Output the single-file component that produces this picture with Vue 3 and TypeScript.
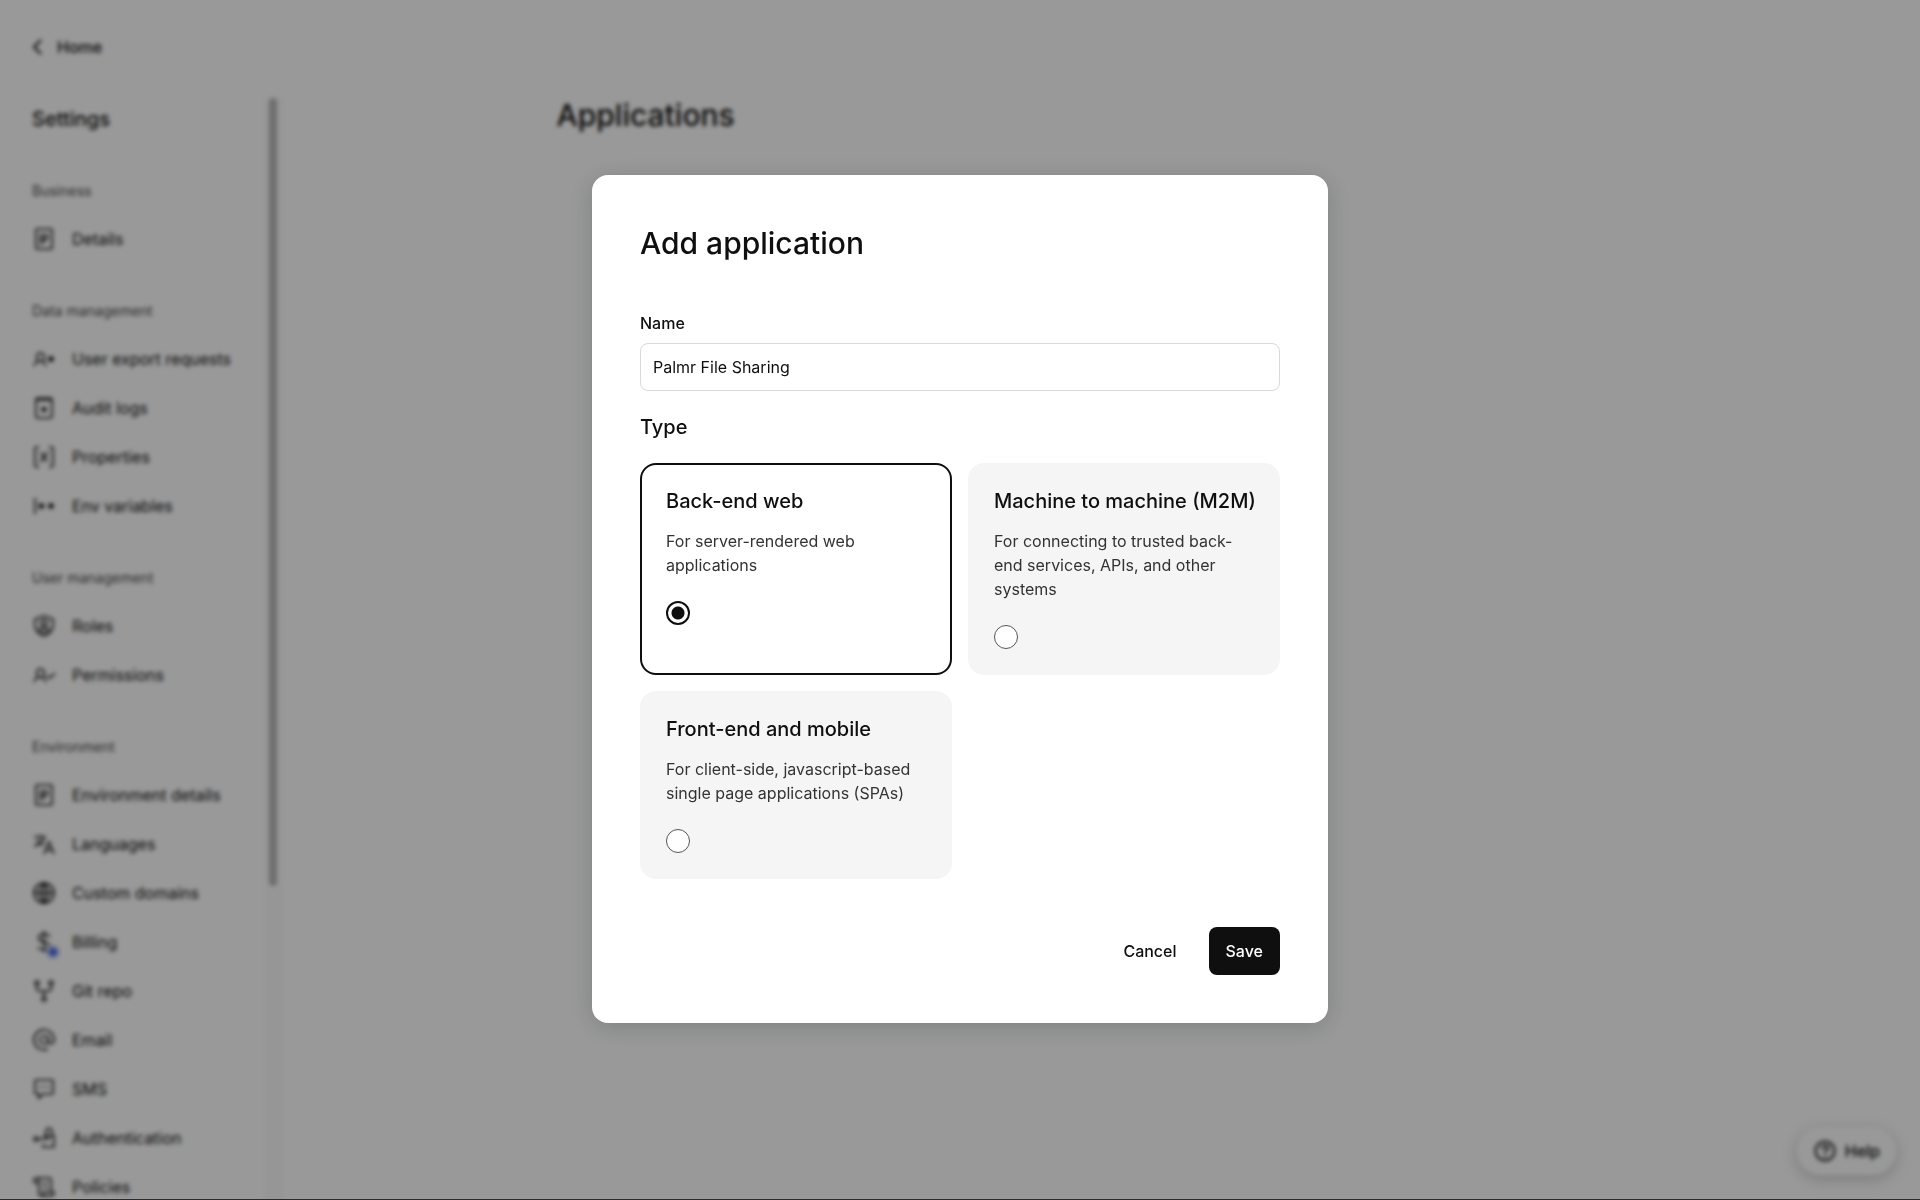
<script setup lang="ts">
import { ref } from 'vue'

interface NavItem {
  label: string
  icon: string
  badge?: boolean
}

interface NavGroup {
  title: string
  items: NavItem[]
}

interface AppType {
  id: string
  title: string
  description: string
}

const icons: Record<string, string> = {
  document: 'M5 2h14q1 0 1 1v18q0 1-1 1H5q-1 0-1-1V3q0-1 1-1zM9 18V8h6v4H9M12 12v4',
  userPlus: 'M2 19c1-4 3-5 6-5s5 1 6 5M5 13V9c0-4 7-4 7 0v4c-1 2-6 2-7 0M19 9v6M16 12h6M17 10l4 4M21 10l-4 4',
  audit: 'M6 2h12q2 0 2 2v16q0 2-2 2H6q-2 0-2-2V4q0-2 2-2zM4 4h16M12 11v5M9 13h6M10 12l4 3M14 12l-4 3',
  brackets: 'M7 2H5Q3 2 3 4v16q0 2 2 2h2M17 2h2q2 0 2 2v16q0 2-2 2h-2M8 8c4 0 4 8 8 8M16 7l-8 10',
  env: 'M3 4v16M7 12h5M9 9v6M7 10l5 4M12 10l-5 4M16 12h6M19 9v6M17 10l4 4M21 10l-4 4',
  shield: 'M12 2l9 3v7c0 5-4 8-9 10-5-2-9-5-9-10V5zM12 6a3 3 0 1 1 0 6 3 3 0 0 1 0-6M6 17c2-4 10-4 12 0M8 18h8',
  userCheck: 'M2 19c1-4 3-5 6-5s5 1 6 5M5 13V9c0-4 7-4 7 0v4c-1 2-6 2-7 0M15 13l3 2 5-5',
  languages: 'M2 5h12M8 3v2M12 5c-1 5-5 8-10 9M5 8c1 2 4 4 7 5M12 22l5-12 5 12M14 18h6',
  globe: 'M12 2a10 10 0 1 1 0 20 10 10 0 0 1 0-20M2 12h20M12 2v20M12 2c-6 6-6 14 0 20M12 2c6 6 6 14 0 20',
  dollar: 'M12 1v21M18 7c-1-2-3-3-6-3-7 0-7 7 0 8s7 8 0 8c-3 0-5-1-6-3',
  branch: 'M5 2a2 2 0 1 1 0 4 2 2 0 0 1 0-4M19 2a2 2 0 1 1 0 4 2 2 0 0 1 0-4M12 18a2 2 0 1 1 0 4 2 2 0 0 1 0-4M5 6v4q0 2 2 2h10q2 0 2-2V6M12 12v6',
  at: 'M12 8a4 4 0 1 1 0 8 4 4 0 0 1 0-8M16 8v5c0 4 6 3 6-1a10 10 0 1 0-6 9',
  chat: 'M4 3h16q1 0 1 1v12q0 1-1 1h-9l-4 4v-4H4q-1 0-1-1V4q0-1 1-1zM7 10h2M11 10h2M15 10h2',
  auth: 'M14 10V6c0-5 6-5 6 0v4M11 10h11v11H11v-3M4 11a2 2 0 1 1 0 4 2 2 0 0 1 0-4M6 13h10M16 10v4',
  scroll: 'M5 3h12q2 0 2 2v12M5 3c-4 0-4 5 0 5h2V3M7 8v10q0 3 3 3h9q3 0 3-4H11v4M11 8h4M11 12h4',
}

const groups: NavGroup[] = [
  { title: 'Business', items: [{ label: 'Details', icon: 'document' }] },
  {
    title: 'Data management',
    items: [
      { label: 'User export requests', icon: 'userPlus' },
      { label: 'Audit logs', icon: 'audit' },
      { label: 'Properties', icon: 'brackets' },
      { label: 'Env variables', icon: 'env' },
    ],
  },
  {
    title: 'User management',
    items: [
      { label: 'Roles', icon: 'shield' },
      { label: 'Permissions', icon: 'userCheck' },
    ],
  },
  {
    title: 'Environment',
    items: [
      { label: 'Environment details', icon: 'document' },
      { label: 'Languages', icon: 'languages' },
      { label: 'Custom domains', icon: 'globe' },
      { label: 'Billing', icon: 'dollar', badge: true },
      { label: 'Git repo', icon: 'branch' },
      { label: 'Email', icon: 'at' },
      { label: 'SMS', icon: 'chat' },
      { label: 'Authentication', icon: 'auth' },
      { label: 'Policies', icon: 'scroll' },
    ],
  },
]

const appTypes: AppType[] = [
  { id: 'backend', title: 'Back-end web', description: 'For server-rendered web applications' },
  {
    id: 'm2m',
    title: 'Machine to machine (M2M)',
    description: 'For connecting to trusted back-end services, APIs, and other systems',
  },
  {
    id: 'frontend',
    title: 'Front-end and mobile',
    description: 'For client-side, javascript-based single page applications (SPAs)',
  },
]

const name = ref('Palmr File Sharing')
const selected = ref('backend')
</script>

<template>
  <div class="app">
    <div class="page">
      <aside class="sidebar">
        <a class="home" href="#">
          <svg class="chevron" viewBox="0 0 12 18" aria-hidden="true"><path d="M9 2 2 9l7 7" /></svg>
          Home
        </a>
        <div class="scroller">
          <nav class="nav">
            <h2 class="nav-title">Settings</h2>
            <section v-for="group in groups" :key="group.title" class="group">
              <h3 class="group-title">{{ group.title }}</h3>
              <ul class="items">
                <li v-for="item in group.items" :key="item.label">
                  <a class="item" href="#">
                    <span class="item-icon">
                      <svg viewBox="0 0 24 24" aria-hidden="true"><path :d="icons[item.icon]" /></svg>
                      <span v-if="item.badge" class="badge"></span>
                    </span>
                    {{ item.label }}
                  </a>
                </li>
              </ul>
            </section>
          </nav>
          <div class="track"><div class="thumb"></div></div>
        </div>
      </aside>
      <main class="main">
        <div class="content">
          <h1 class="page-title">Applications</h1>
        </div>
      </main>
      <button class="help" type="button">
        <svg viewBox="0 0 24 24" aria-hidden="true">
          <circle cx="12" cy="12" r="9.5" />
          <path d="M9 10c0-4 6-4 6-1 0 3-3 2-3 5M12 16v2" />
        </svg>
        Help
      </button>
    </div>

    <div class="overlay">
      <form class="modal" role="dialog" aria-modal="true" aria-labelledby="dialog-title" @submit.prevent>
        <h2 id="dialog-title" class="modal-title">Add application</h2>
        <div class="field">
          <label for="app-name">Name</label>
          <input id="app-name" v-model="name" type="text" />
        </div>
        <fieldset class="types">
          <legend>Type</legend>
          <div class="cards">
            <label
              v-for="type in appTypes"
              :key="type.id"
              class="card"
              :class="{ selected: selected === type.id }"
            >
              <span class="card-title">{{ type.title }}</span>
              <span class="card-text">{{ type.description }}</span>
              <input v-model="selected" type="radio" name="app-type" :value="type.id" />
            </label>
          </div>
        </fieldset>
        <div class="actions">
          <button class="btn" type="button">Cancel</button>
          <button class="btn primary" type="submit">Save</button>
        </div>
      </form>
    </div>
  </div>
</template>

<style>
body {
  margin: 0;
}
</style>

<style scoped>
.app,
.app * {
  box-sizing: border-box;
}

.app {
  position: relative;
  height: 100vh;
  overflow: hidden;
  background: #fff;
  color: #0f0f0f;
  font: 400 16px/24px Inter, 'Liberation Sans', sans-serif;
}

h1,
h2,
h3,
ul {
  margin: 0;
  padding: 0;
  font-weight: 500;
  list-style: none;
}

a {
  color: inherit;
  text-decoration: none;
}

svg {
  display: block;
  fill: none;
  stroke: currentColor;
  stroke-width: 2;
}

.page {
  display: flex;
  height: 100%;
}

.sidebar {
  display: flex;
  flex-direction: column;
  flex: none;
  width: 283px;
}

.home {
  display: flex;
  align-items: center;
  gap: 13px;
  flex: none;
  height: 98px;
  padding: 0 32px 4px;
  font-weight: 500;
}

.chevron {
  width: 12px;
  height: 18px;
}

.scroller {
  display: flex;
  flex: 1;
  min-height: 0;
}

.nav {
  flex: 1;
  overflow: hidden;
  padding-top: 7px;
}

.nav-title {
  padding-left: 32px;
  font-size: 20px;
  font-weight: 500;
  line-height: 28px;
}

.group {
  padding-top: 46px;
}

.group + .group {
  padding-top: 36px;
}

.group-title {
  padding-left: 32px;
  color: #4a4a4a;
  font-size: 14px;
  font-weight: 400;
  line-height: 24px;
}

.items {
  display: grid;
  gap: 1px;
  padding-top: 12px;
}

.item {
  display: flex;
  align-items: center;
  gap: 16px;
  height: 48px;
  padding-left: 32px;
  color: #0f0f0f;
  font-weight: 400;
  white-space: nowrap;
}

.item-icon {
  position: relative;
  width: 24px;
}

.item-icon svg {
  width: 24px;
  height: 24px;
  stroke-width: 1.6;
}

.badge {
  position: absolute;
  right: -4px;
  bottom: -5px;
  width: 14px;
  height: 14px;
  border: 3px solid #c3d0fa;
  border-radius: 50%;
  background: #4a69d8;
}

.track {
  width: 18px;
  border: solid #f6f6f6;
  border-width: 0 1px;
  padding: 0 5px 0 3px;
  background: #fbfbfb;
}

.thumb {
  height: 71.5%;
  border-radius: 4px;
  background: #b8b8b8;
}

.main {
  flex: 1;
  padding: 95px 32px 0;
}

.content {
  max-width: 1090px;
  margin: 0 auto;
}

.page-title {
  font-size: 30px;
  line-height: 40px;
}

.help {
  position: absolute;
  right: 24px;
  bottom: 25px;
  display: flex;
  align-items: center;
  gap: 8px;
  height: 48px;
  padding: 0 16px;
  border: 0;
  border-radius: 24px;
  background: #fff;
  box-shadow: 0 4px 16px rgba(0, 0, 0, 0.2);
  color: #0f0f0f;
  font: inherit;
  font-weight: 500;
}

.help svg {
  width: 24px;
  height: 24px;
}

.overlay {
  position: absolute;
  inset: 0;
  display: grid;
  place-items: center;
  padding-bottom: 1px;
  border-bottom: 1px solid #2b2b2b;
  background: rgba(0, 0, 0, 0.4);
  backdrop-filter: blur(2px);
}

.modal {
  width: 736px;
  max-width: 100%;
  padding: 48px;
  border-radius: 16px;
  background: #fff;
  box-shadow: 0 4px 24px rgba(15, 30, 25, 0.2);
}

.modal-title {
  font-size: 30px;
  line-height: 40px;
}

.field {
  display: grid;
  gap: 8px;
  padding-top: 48px;
}

.field label {
  font-weight: 500;
}

.field input {
  width: 100%;
  height: 48px;
  padding: 0 12px;
  border: 1px solid #d9d9d9;
  border-radius: 8px;
  background: #fff;
  color: #0f0f0f;
  font: inherit;
}

.types {
  margin: 24px 0 0;
  padding: 0;
  border: 0;
}

.types legend {
  padding: 0;
  font-size: 20px;
  font-weight: 500;
}

.cards {
  display: grid;
  grid-template-columns: repeat(2, minmax(0, 1fr));
  gap: 16px;
  padding-top: 24px;
}

.card {
  display: flex;
  flex-direction: column;
  align-items: flex-start;
  padding: 24px;
  border: 2px solid #f5f5f5;
  border-radius: 16px;
  background: #f5f5f5;
}

.card.selected {
  border-color: #0f0f0f;
  background: #fff;
}

.card-title {
  font-size: 20px;
  font-weight: 500;
  white-space: nowrap;
}

.card-text {
  padding: 16px 0 24px;
  color: #333;
}

.card input {
  appearance: none;
  width: 24px;
  height: 24px;
  margin: 0;
  border: 1px solid #555;
  border-radius: 50%;
  background: #fff;
}

.card input:checked {
  border: 2px solid #0f0f0f;
  background: radial-gradient(circle, #0f0f0f 6px, #fff 7px);
}

.actions {
  display: flex;
  justify-content: flex-end;
  gap: 16px;
  padding-top: 48px;
}

.btn {
  height: 48px;
  padding: 0 16px;
  border: 0;
  border-radius: 8px;
  background: none;
  color: #0f0f0f;
  font: inherit;
  font-weight: 500;
}

.btn.primary {
  padding: 0 17px;
  background: #0f0f0f;
  color: #fff;
}
</style>
